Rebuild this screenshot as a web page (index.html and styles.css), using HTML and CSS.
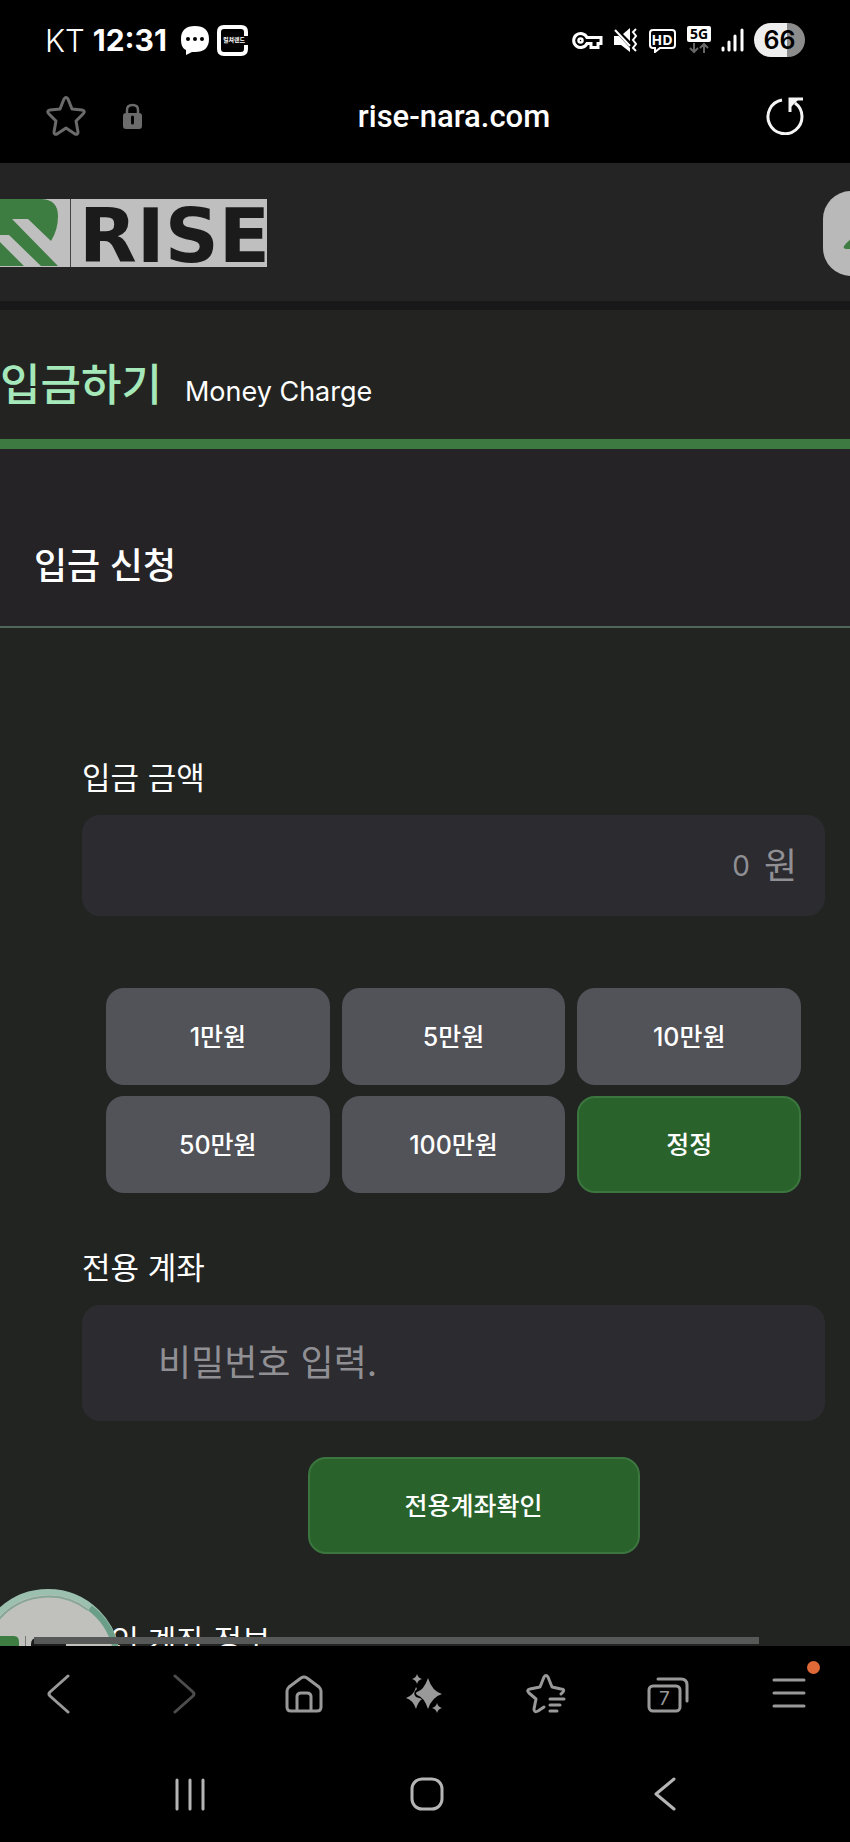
FILE: index.html
```html
<!doctype html>
<html lang="ko">
 <head>
  <meta charset="UTF-8">
  <meta name="viewport" content="width=device-width, initial-scale=1">
  <link rel="stylesheet" href="styles.css">
  <title>입금하기</title>
 </head>
 <body>
  <!-- 상태 표시줄 -->
  <div class="status">
    <span class="carrier">KT</span>
    <span class="clock">12:31</span>
    <svg class="talk" width="29" height="29" viewBox="0 0 29 29">
      <path d="M14 0C23 0 28 4 28 13S23 26 14 26H11L5 29V24C1 22 0 18 0 13C0 4 5 0 14 0Z" fill="#fff"/>
      <g fill="#000"><circle cx="7" cy="13" r="2"/><circle cx="14" cy="13" r="2"/><circle cx="21" cy="13" r="2"/></g>
    </svg>
    <span class="brand">
      <svg width="31" height="31" viewBox="0 0 31 31" fill="none" stroke="#fff" stroke-width="4">
        <path d="M29 11V7Q29 2 24 2H7Q2 2 2 7V24Q2 29 7 29H24Q29 29 29 24V20"/>
      </svg>
      <b>컬쳐랜드</b>
    </span>
    <div class="status-right">
      <svg width="31" height="19" viewBox="0 0 31 19" fill="none" stroke="#fff" stroke-width="3">
        <path d="M15 6.500A7 7 0 1 0 15 12.500H19V16.500H26V12.500H29V6.500Z"/>
        <circle cx="8.500" cy="9.500" r="2" stroke-width="2.500"/>
      </svg>
      <svg width="25" height="25" viewBox="0 0 25 25">
        <path d="M1 8H6L17 20V24L8 17H1ZM10 6L17 0V13Z" fill="#fff"/>
        <path d="M2 2L17 18" stroke="#fff" stroke-width="2"/>
        <path d="M23 1L20 4L23 8L20 12L23 16L20 20L23 23" fill="none" stroke="#fff" stroke-width="2"/>
      </svg>
      <svg width="29" height="25" viewBox="0 0 29 25">
        <path d="M5 2H24Q27 2 27 5V17Q27 20 24 20H12L7 24V20H5Q2 20 2 17V5Q2 2 5 2Z" fill="none" stroke="#fff" stroke-width="2"/>
        <text x="14" y="17" text-anchor="middle" class="badge-text" fill="#fff">HD</text>
      </svg>
      <svg width="24" height="28" viewBox="0 0 24 28">
        <rect width="24" height="16" rx="2" fill="#fff"/>
        <text x="12" y="13" text-anchor="middle" class="badge-text" fill="#000">5G</text>
        <path d="M7 17V26M3 22L7 26L11 22M17 27V18M13 22L17 18L21 22" fill="none" stroke="#666" stroke-width="2"/>
      </svg>
      <svg width="23" height="24" viewBox="0 0 23 24" stroke="#fff" stroke-width="3" stroke-linecap="round">
        <path d="M2 20V22M8 14V22M14 8V22M21 2V22"/>
      </svg>
      <span class="battery">66</span>
    </div>
  </div>

  <!-- 주소창 -->
  <div class="address">
    <button class="icon-btn" aria-label="북마크">
      <svg width="40" height="40" viewBox="0 0 40 40" fill="none" stroke="#6b6b6b" stroke-width="3" stroke-linejoin="round">
        <path d="M18 3Q20 0 22 3L26 13L36 14Q40 15 37 18L30 25L32 36Q32 39 29 38L20 32L11 38Q8 39 8 36L10 25L3 18Q0 15 4 14L14 13Z"/>
      </svg>
    </button>
    <svg width="19" height="26" viewBox="0 0 19 26">
      <path d="M4 11V7Q4 2 9.500 2T15 7V11" fill="none" stroke="#6b6b6b" stroke-width="2.500"/>
      <rect y="10" width="19" height="16" rx="3" fill="#6b6b6b"/>
      <path d="M9.500 14V20" stroke="#000" stroke-width="3" stroke-linecap="round"/>
    </svg>
    <span class="url">rise-nara.com</span>
    <button class="icon-btn" aria-label="새로고침">
      <svg width="38" height="38" viewBox="0 0 38 38" fill="none" stroke="#f5f5f5" stroke-width="3">
        <path d="M16 3A17 17 0 1 0 29 6"/>
        <path d="M37 2H24V15"/>
        <path d="M24 2H33L24 11Z" fill="#f5f5f5" stroke="none"/>
      </svg>
    </button>
  </div>

  <!-- 사이트 화면 -->
  <div class="viewport">
    <header class="site-header">
      <svg class="logo" width="267" height="68" viewBox="0 0 267 68">
        <rect width="267" height="68" fill="#bfbfbf"/>
        <path d="M0 0H42Q58 1 58 17Q58 31 51 42L28 20H12L58 67H41L9 36H0ZM0 43L24 67H0Z" fill="#3d7d41"/>
        <path d="M70.500 0V68" stroke="#444"/>
        <text x="79" y="63" class="logo-text">RISE</text>
      </svg>
      <button class="user-btn" aria-label="내 정보">
        <svg width="50" height="50" viewBox="0 0 50 50" fill="#3f7d43">
          <circle cx="25" cy="14" r="10"/>
          <path d="M3 38Q12 26 25 26T47 38Q46 41 40 41H5Q2 41 3 38Z"/>
        </svg>
      </button>
    </header>

    <div class="page-title">
      <h1>입금하기</h1>
      <p>Money Charge</p>
    </div>

    <main>
      <h2>입금 신청</h2>
      <form class="charge">
        <label for="amount">입금 금액</label>
        <div class="field amount">
          <input id="amount" type="text" inputmode="numeric" placeholder="0">
          <span>원</span>
        </div>
        <div class="quick">
          <button type="button">1만원</button>
          <button type="button">5만원</button>
          <button type="button">10만원</button>
          <button type="button">50만원</button>
          <button type="button">100만원</button>
          <button type="button" class="green">정정</button>
        </div>
        <label for="account">전용 계좌</label>
        <div class="field account">
          <input id="account" type="password" placeholder="비밀번호 입력.">
        </div>
        <div class="actions">
          <button type="button" class="green submit">전용계좌확인</button>
        </div>
        <p class="info">본인 계좌 정보</p>
      </form>
    </main>

    <!-- 떠 있는 로고 버튼 -->
    <div class="float-logo">
      <svg width="144" height="144" viewBox="0 0 144 144">
        <circle cx="72" cy="72" r="69" fill="#c0c1bd" stroke="#9cc0b0" stroke-width="6"/>
        <path d="M20 34A65 65 0 0 1 112 21" fill="none" stroke="#85a698" stroke-width="2"/>
        <path d="M114 19A68 68 0 0 1 140 62" fill="none" stroke="#6b9e88" stroke-width="6"/>
        <path d="M20 47H38Q43 47 43 53V80H20Z" fill="#3d7d41"/>
        <path d="M49.500 47V80" stroke="#777"/>
        <path d="M55 80V55Q55 49 61 49H90V80Z" fill="#1b1b1b"/>
      </svg>
    </div>
    <div class="scroll-thumb"></div>
  </div>

  <!-- 브라우저 도구 -->
  <nav class="toolbar">
    <button aria-label="뒤로">
      <svg width="40" height="40" viewBox="0 0 40 40"><path d="M27 2L9 18Q7 20 9 22L27 38"/></svg>
    </button>
    <button class="off" aria-label="앞으로">
      <svg width="40" height="40" viewBox="0 0 40 40"><path d="M13 2L31 18Q33 20 31 22L13 38"/></svg>
    </button>
    <button aria-label="홈">
      <svg width="40" height="40" viewBox="0 0 40 40">
        <path d="M3 17Q3 15 5 13L17 4Q20 2 23 4L35 13Q37 15 37 17V33Q37 37 33 37H7Q3 37 3 33ZM13 37V23Q13 19 17 19H23Q27 19 27 23V37"/>
      </svg>
    </button>
    <button aria-label="AI">
      <svg class="fill" width="40" height="40" viewBox="0 0 40 40">
        <path d="M23 4Q27 17 37 20Q27 23 23 35Q19 23 12 21Q10 19 12 18Q19 16 23 4ZM12 0Q13 4 17 5Q13 6 12 10Q11 6 7 5Q11 4 12 0ZM32 29Q33 33 37 34Q33 35 32 39Q31 35 27 34Q31 33 32 29Z"/>
        <path d="M11 13L12 15Q7 19 11 23L17 25Q13 28 11 35Q8 26 1 24Q9 21 11 13Z"/>
      </svg>
    </button>
    <button aria-label="북마크 목록">
      <svg width="40" height="40" viewBox="0 0 40 40">
        <path d="M35 20L37 18Q39 15 35 15L26 13L22 3Q20 0 18 3L14 13L4 15Q0 16 3 19L10 25L8 35Q8 39 12 37L18 33M24 25H38M24 31H34M24 37H31"/>
      </svg>
    </button>
    <button aria-label="탭 7개">
      <svg width="42" height="40" viewBox="0 0 42 40">
        <rect x="2" y="12" width="31" height="25" rx="4"/>
        <path d="M11 5H34Q40 5 40 11V27"/>
        <text x="17.500" y="31" text-anchor="middle">7</text>
      </svg>
    </button>
    <button aria-label="메뉴">
      <svg width="40" height="40" viewBox="0 0 40 40"><path d="M5 6H35M5 19H35M5 32H35"/></svg>
      <i class="dot"></i>
    </button>
  </nav>

  <nav class="system">
    <button aria-label="최근 앱">
      <svg width="36" height="36" viewBox="0 0 36 36"><path d="M5 4V33M18 4V33M31 4V33"/></svg>
    </button>
    <button aria-label="홈 화면">
      <svg width="36" height="36" viewBox="0 0 36 36"><rect x="3" y="3" width="30" height="30" rx="10"/></svg>
    </button>
    <button aria-label="이전">
      <svg width="36" height="36" viewBox="0 0 36 36"><path d="M27 3L9 18L27 33"/></svg>
    </button>
  </nav>
 </body>
</html>
```
FILE: styles.css
```css
*{
  box-sizing: border-box;
  margin: 0;
  padding: 0;
}
body{
  display: flex;
  flex-direction: column;
  height: 100vh;
  overflow: hidden;
  background: #000;
  color: #fff;
  font-family: Inter, "Noto Sans CJK KR", sans-serif;
}
button{
  border: 0;
  background: none;
  color: inherit;
  font: inherit;
}
svg{
  display: block;
  flex-shrink: 0;
}
/* 상태 표시줄 */
.status{
  display: flex;
  align-items: center;
  flex-shrink: 0;
  height: 80px;
  padding: 0 45px;
  font-size: 31px;
}
.carrier{
  font-family: Inter, sans-serif;
  font-weight: 300;
}
.clock{
  margin-left: 8px;
  font-weight: 700;
  font-size: 30px;
}
.talk{
  margin: 0 7px 0 14px;
}
.brand{
  position: relative;
}
.brand b{
  position: absolute;
  top: 10px;
  left: 6px;
  font-size: 6px;
  line-height: 10px;
  white-space: nowrap;
}
.status-right{
  display: flex;
  align-items: center;
  gap: 10px;
  margin-left: auto;
}
.badge-text{
  font: 700 14px "Open Sans", sans-serif;
}
.battery{
  width: 51px;
  height: 34px;
  border-radius: 17px;
  background: linear-gradient(90deg, #eee 65%, #8c8c8c 65%);
  color: #000;
  font-size: 25px;
  font-weight: 600;
  line-height: 34px;
  text-align: center;
}
/* 주소창 */
.address{
  display: flex;
  align-items: center;
  flex-shrink: 0;
  height: 83px;
  padding: 0 46px 11px;
}
.address .icon-btn + svg{
  margin-left: 37px;
}
.url{
  flex: 1;
  font: 500 31px Roboto, sans-serif;
  text-align: center;
}
/* 사이트 */
.viewport{
  position: relative;
  flex: 1;
  min-height: 0;
  overflow: hidden;
  background: #222422;
}
.site-header{
  display: flex;
  align-items: center;
  justify-content: space-between;
  height: 147px;
  padding-top: 2px;
  border-bottom: 9px solid #181818;
  background: #242424;
}
.logo-text{
  font: 700 75px "DejaVu Sans", sans-serif;
  fill: #1b1b1b;
}
.user-btn{
  width: 87px;
  height: 85px;
  margin-right: -60px;
  padding-left: 18px;
  border-radius: 28px;
  background: #b9b9b9;
}
.page-title{
  display: flex;
  align-items: baseline;
  gap: 23px;
  padding: 40px 0 25px;
  border-bottom: 10px solid #3d7a41;
  background: #232422;
}
.page-title h1{
  color: #a5e8b9;
  font: 500 44px/64px "Noto Sans CJK KR", sans-serif;
}
.page-title p{
  font-size: 27px;
}
h2{
  padding: 91px 34px 34px;
  border-bottom: 2px solid #50665d;
  background: #252326;
  font-size: 36px;
  font-weight: 500;
  line-height: 52px;
}
.charge{
  padding: 126px 25px 0 82px;
}
.charge label,
.info{
  display: block;
  margin-bottom: 13px;
  font-size: 31px;
  line-height: 48px;
}
.field{
  display: flex;
  align-items: center;
  border-radius: 18px;
  background: #2b2b30;
  color: #909094;
  font-size: 36px;
}
.field input{
  flex: 1;
  min-width: 0;
  border: 0;
  outline: 0;
  background: none;
  color: inherit;
  font: inherit;
}
.field input::placeholder{
  color: #909094;
}
.amount{
  gap: 14px;
  height: 101px;
  padding: 0 28px;
}
.amount input{
  font-size: 28px;
  text-align: right;
}
.amount span{
  line-height: 52px;
}
.account{
  height: 116px;
  padding: 0 28px 0 76px;
}
.quick{
  display: grid;
  grid-template-columns: repeat(3, 1fr);
  gap: 11px 12px;
  margin: 72px 24px 51px;
}
.quick button,
.submit{
  height: 97px;
  padding-bottom: 4px;
  border-radius: 18px;
  background: #525259;
  font-size: 25px;
  font-weight: 500;
}
.charge .green{
  border: 2px solid #3c763f;
  background: #29632b;
}
.actions{
  padding: 36px 0 63px 40px;
  text-align: center;
}
.submit{
  display: block;
  width: 332px;
  margin: 0 auto;
}
/* 화면 위에 떠 있는 것 */
.float-logo{
  position: absolute;
  bottom: -87px;
  left: -24px;
}
.scroll-thumb{
  position: absolute;
  right: 91px;
  bottom: 2px;
  left: 34px;
  height: 7px;
  background: #575958;
}
/* 아래쪽 도구 */
.toolbar{
  display: grid;
  grid-template-columns: repeat(7, 1fr);
  flex-shrink: 0;
  height: 96px;
}
.system{
  display: grid;
  grid-template-columns: repeat(3, 1fr);
  flex-shrink: 0;
  height: 100px;
  padding: 4px 66px 0 71px;
}
.toolbar button,
.system button{
  display: flex;
  position: relative;
  align-items: center;
  justify-content: center;
}
.toolbar svg,
.system svg{
  fill: none;
  stroke: #999;
  stroke-width: 3;
  stroke-linecap: round;
  stroke-linejoin: round;
}
.system svg{
  stroke: #b5b5b5;
}
.toolbar .off svg{
  stroke: #4d4d4d;
}
.toolbar .fill{
  fill: #999;
  stroke: none;
}
.toolbar text{
  fill: #999;
  stroke: none;
  font-size: 19px;
}
.dot{
  position: absolute;
  top: 15px;
  right: 30px;
  width: 13px;
  height: 13px;
  border-radius: 50%;
  background: #df6a38;
}
```
